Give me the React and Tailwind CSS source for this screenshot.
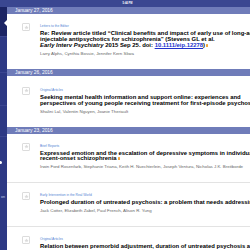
import React from "react";

const font = { fontFamily: '"Liberation Sans", Arial, sans-serif' };

function StarBox() {
  return (
    <div className="w-[8px] h-[8px] shrink-0 border border-[#dcdcdc] rounded-[1px] flex items-center justify-center bg-white">
      <svg viewBox="0 0 24 24" className="w-[5px] h-[5px]">
        <path
          d="M12 2l2.9 6.6 7.1.6-5.4 4.7 1.6 7L12 17.3 5.8 21l1.6-7L2 9.2l7.1-.6z"
          fill="#dadada"
        />
      </svg>
    </div>
  );
}

function Pdf() {
  return <span className="inline-block w-[2px] h-[3px] ml-[1px] bg-[#f2a53c] rounded-[0.5px] align-middle" />;
}

function Card({ category, lines, authors, last, roomy }) {
  return (
    <div
      className={
        "flex pl-[15px] pb-[13px] " +
        (roomy ? "pt-[12px] " : "pt-[10px] ") +
        (last ? "" : "border-b border-[#e3e3e3]")
      }
    >
      <div className="mt-[-1px]">
        <StarBox />
      </div>
      <div className="ml-[10px] min-w-0 whitespace-nowrap">
        <div className="text-[3.3px] leading-[5px] text-[#4f7fd3]">{category}</div>
        <div className="mt-[2px] text-[5.9px] leading-[5.9px] font-bold text-black">
          {lines.map((l, i) => (
            <div key={i}>{l}</div>
          ))}
        </div>
        <div className="mt-[2px] text-[4.4px] leading-[5px] text-[#666666]">{authors}</div>
      </div>
    </div>
  );
}

function DateHeader({ children }) {
  return (
    <div className="h-[7px] bg-[#6f7cb9] text-white text-[4.9px] leading-[7px] pl-[8px] whitespace-nowrap">
      {children}
    </div>
  );
}

export default function App() {
  return (
    <div className="w-[250px] h-[250px] overflow-hidden flex flex-col bg-white" style={font}>
      <div className="h-[7px] shrink-0 bg-[#3a4791] flex items-center justify-center">
        <span className="text-[2.6px] font-bold text-white ml-[5px]">5:44 PM</span>
      </div>
      <div className="flex flex-1 min-h-0">
        {/* collapsed menu column */}
        <div className="w-[7px] shrink-0 bg-[#2d3984] flex flex-col relative overflow-hidden">
          <div className="h-[30px] bg-[#1b2464] border-b border-[#3b4690]" />
          <div className="h-[36px] border-b border-[#3b4690]" />
          <div className="h-[33px] border-b border-[#3b4690]" />
          <div className="h-[31px] border-b border-[#3b4690]" />
          <div className="h-[50px] flex items-center">
            <span className="block w-[3px] h-[3px] rounded-full bg-white ml-[-1px]" />
          </div>
          <div className="h-[22px] flex items-center justify-end">
            <span className="text-[3.6px] text-[#c9cfe8] mr-[2px]">on</span>
          </div>
          <div className="absolute left-[4px] top-[13px] w-0 h-0 border-y-[3.5px] border-y-transparent border-r-[3px] border-r-white" />
        </div>
        <div className="flex-1 min-w-0 overflow-hidden">
          <DateHeader>January 27, 2016</DateHeader>
          <Card
            category="Letters to the Editor"
            lines={[
              "Re: Review article titled \u201cClinical benefits and impact of early use of long-acting",
              "injectable antipsychotics for schizophrenia\u201d (Stevens GL et al.",
              <span>
                <i>Early Interv Psychiatry</i> 2015 Sep 25. doi:{" "}
                <span className="text-[#2233cc] underline">10.1111/eip.12278</span>)
                <Pdf />
              </span>,
            ]}
            authors="Larry Alphs, Cynthia Bossie, Jennifer Kern Sliwa"
            last
          />
          <DateHeader>January 26, 2016</DateHeader>
          <Card
            category="Original Articles"
            lines={[
              "Seeking mental health information and support online: experiences and",
              "perspectives of young people receiving treatment for first-episode psychosis",
            ]}
            authors="Shalini Lal, Valentin Nguyen, Joanie Theriault"
            last
            roomy
          />
          <DateHeader>January 23, 2016</DateHeader>
          <Card
            category="Brief Reports"
            lines={[
              "Expressed emotion and the escalation of depressive symptoms in individuals with",
              <span>
                recent-onset schizophrenia
                <Pdf />
              </span>,
            ]}
            authors="Irwin Ford Rosenfarb, Stephanie Triana, Keith H. Nuechterlein, Joseph Ventura, Nicholas J.K. Breitborde"
          />
          <Card
            category="Early Intervention in the Real World"
            lines={["Prolonged duration of untreated psychosis: a problem that needs addressing"]}
            authors="Jack Cotter, Elizabeth Zabel, Paul French, Alison R. Yung"
          />
          <Card
            category="Original Articles"
            lines={[
              "Relation between premorbid adjustment, duration of untreated psychosis and",
              <span>
                close interpersonal trauma in first-episode psychosis
                <Pdf />
              </span>,
            ]}
            authors="Sarah Bendall"
          />
        </div>
      </div>
    </div>
  );
}
